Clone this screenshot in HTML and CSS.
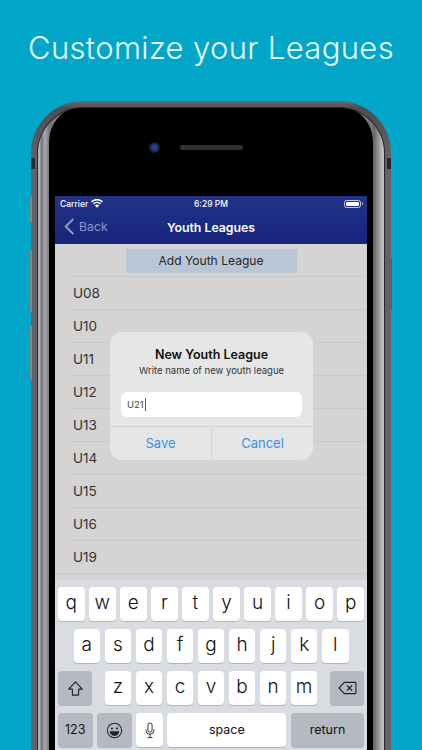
FILE: index.html
```html
<!DOCTYPE html>
<html lang="en">
<head>
<meta charset="utf-8">
<title>Customize your Leagues</title>
<link rel="stylesheet" href="styles.css">
</head>
<body>
<h1 class="headline">Customize your Leagues</h1>
<div class="phone">
  <span class="btn btn-mute"></span><span class="btn btn-up"></span><span class="btn btn-down"></span><span class="btn btn-power"></span>
  <span class="antenna antenna-l"></span><span class="antenna antenna-r"></span>
  <div class="band">
    <div class="bezel">
      <div class="sensors"><span class="camera"></span><span class="speaker"></span></div>
      <div class="screen">
        <header class="bar">
          <div class="status">
            <span class="carrier">Carrier
              <svg class="wifi" viewBox="0 0 14 10" width="12" height="9"><path d="M7 10 4.6 7.3a3.4 3.4 0 0 1 4.8 0zM3.5 6.2 2.2 4.8a6.8 6.8 0 0 1 9.6 0l-1.3 1.4a5 5 0 0 0-7 0zM1.2 3.8 0 2.5a10 10 0 0 1 14 0l-1.2 1.3a8.2 8.2 0 0 0-11.6 0z" fill="#fff"/></svg>
            </span>
            <span class="clock">6:29 PM</span>
            <span class="battery"><span class="battery-fill"></span></span>
          </div>
          <nav class="nav">
            <span class="back">
              <svg viewBox="0 0 11 18" width="11" height="17"><path d="M9.5 1 1.5 9l8 8" fill="none" stroke="#8d97c2" stroke-width="2.2"/></svg>
              Back
            </span>
            <span class="nav-title">Youth Leagues</span>
          </nav>
        </header>
        <main class="content">
          <div class="add-wrap"><span class="add">Add Youth League</span></div>
          <ul class="list">
            <li>U08</li><li>U10</li><li>U11</li><li>U12</li><li>U13</li><li>U14</li><li>U15</li><li>U16</li><li>U19</li>
          </ul>
          <div class="alert">
            <div class="alert-body">
              <div class="alert-title">New Youth League</div>
              <div class="alert-msg">Write name of new youth league</div>
              <div class="alert-input">U21<span class="caret"></span></div>
            </div>
            <div class="alert-actions"><span>Save</span><span>Cancel</span></div>
          </div>
        </main>
        <section class="kbd">
          <div class="kb-row">
            <span class="key">q</span><span class="key">w</span><span class="key">e</span><span class="key">r</span><span class="key">t</span><span class="key">y</span><span class="key">u</span><span class="key">i</span><span class="key">o</span><span class="key">p</span>
          </div>
          <div class="kb-row kb-row-2">
            <span class="key">a</span><span class="key">s</span><span class="key">d</span><span class="key">f</span><span class="key">g</span><span class="key">h</span><span class="key">j</span><span class="key">k</span><span class="key">l</span>
          </div>
          <div class="kb-row">
            <span class="key fn wide-shift"><svg viewBox="0 0 18 18" width="17" height="17"><path d="M9 2 1.8 9.6h3.9V16h6.6V9.6h3.9z" fill="none" stroke="#222" stroke-width="1.2" stroke-linejoin="round"/></svg></span>
            <span class="letters"><span class="key">z</span><span class="key">x</span><span class="key">c</span><span class="key">v</span><span class="key">b</span><span class="key">n</span><span class="key">m</span></span>
            <span class="key fn wide-shift"><svg viewBox="0 0 20 15" width="19" height="14"><path d="M6.5 1.5H18a1 1 0 0 1 1 1v10a1 1 0 0 1-1 1H6.500L1 7.500z" fill="none" stroke="#222" stroke-width="1.200" stroke-linejoin="round"/><path d="m9.500 4.800 5.400 5.400m0-5.400-5.400 5.400" stroke="#222" stroke-width="1.200"/></svg></span>
          </div>
          <div class="kb-row">
            <span class="key fn small-text k-123">123</span>
            <span class="key fn k-emoji"><svg viewBox="0 0 18 18" width="17" height="17"><circle cx="9" cy="9" r="7.600" fill="none" stroke="#222" stroke-width="1.100"/><circle cx="6.300" cy="6.800" r="1.100" fill="#222"/><circle cx="11.700" cy="6.800" r="1.100" fill="#222"/><path d="M4 9.800h10a5 5 0 0 1-10 0z" fill="#222"/></svg></span>
            <span class="key k-mic"><svg viewBox="0 0 12 20" width="10" height="17"><rect x="3.500" y="1" width="5" height="11" rx="2.500" fill="none" stroke="#222" stroke-width="1.100"/><path d="M1.200 8.500v1.300a4.800 4.800 0 0 0 9.600 0V8.500M6 14.600V18M3 18.500h6" fill="none" stroke="#222" stroke-width="1.100"/></svg></span>
            <span class="key small-text k-space">space</span>
            <span class="key fn small-text k-return">return</span>
          </div>
        </section>
      </div>
    </div>
  </div>
</div>
</body>
</html>
```
FILE: styles.css
```css
* { box-sizing: border-box; }
html, body { margin: 0; height: 750px; overflow: hidden; }
body { background: #01a6c9; font-family: Inter, "Liberation Sans", sans-serif; color: #2b2b2b; }

.headline {
  margin: 0;
  height: 101px;
  padding-top: 27px;
  text-align: center;
  font: 300 31px/42px Inter, "Liberation Sans", sans-serif;
  letter-spacing: .35px;
  color: #e8fbff;
  white-space: nowrap;
}

.phone {
  position: relative;
  width: 360px;
  height: 649px;
  margin-left: 31px;
  padding: 6px 6px 0;
  border-radius: 52px 52px 0 0;
  background: linear-gradient(180deg, #6a6b6e 0, #4d4e51 7px, #626366 60px);
}
.band {
  height: 100%;
  padding: 0 11px;
  border: 1px solid #242528;
  border-bottom: 0;
  border-radius: 46px 46px 0 0;
  background:
    linear-gradient(90deg, #b4b5b7 0 2px, #6f7073 3px, #a9aaad 7px, #77787b 11px) left top / 11px 100% no-repeat,
    linear-gradient(270deg, #bcbdbf 0 2px, #a2a3a5 4px, #5f6063 11px) right top / 11px 100% no-repeat,
    #77787b;
}
.bezel {
  position: relative;
  height: 100%;
  padding: 88px 6px 0;
  border-radius: 30px 30px 0 0 / 34px 34px 0 0;
  background: #000;
}
.sensors {
  position: absolute;
  top: 34px;
  left: 0;
  right: 0;
  display: flex;
  justify-content: center;
  align-items: center;
  gap: 20px;
  padding-right: 30px;
}
.camera { width: 11px; height: 11px; border-radius: 50%; background: radial-gradient(circle, #27458f 0 30%, #141a2a 60%, #23252a 100%); }
.speaker { width: 63px; height: 5px; border-radius: 3px; background: #333; }

.btn { position: absolute; width: 2px; border-radius: 1px; background: #85868a; }
.btn-mute { left: -1px; top: 95px; height: 27px; }
.btn-up { left: -1px; top: 149px; height: 62px; }
.btn-down { left: -1px; top: 224px; height: 55px; }
.btn-power { right: -1px; top: 157px; height: 52px; width: 3px; background: #5f6063; }
.antenna { position: absolute; top: 57px; width: 4px; height: 11px; background: #26272a; }
.antenna-l { left: 0; }
.antenna-r { right: 0; }

.screen {
  position: relative;
  width: 312px;
  height: 100%;
  display: flex;
  flex-direction: column;
  overflow: hidden;
}
.bar {
  height: 48px;
  flex: none;
  background: linear-gradient(180deg, #24338a 0, #16257b 100%);
  color: #fff;
}
.status {
  height: 15px;
  padding: 0 5px;
  display: grid;
  grid-template-columns: 1fr auto 1fr;
  align-items: center;
  font-size: 8.500px;
  font-weight: 500;
}
.carrier { display: flex; align-items: center; gap: 3px; }
.battery {
  position: relative;
  justify-self: end;
  margin-right: 1px;
  width: 17px;
  height: 8px;
  padding: 1px;
  border: 1px solid #c7cbe2;
  border-radius: 2.500px;
}
.battery::after {
  content: "";
  position: absolute;
  right: -3px;
  top: 1px;
  width: 1.500px;
  height: 3px;
  background: #c7cbe2;
  border-radius: 0 1px 1px 0;
}
.battery-fill { display: block; height: 100%; background: #fff; border-radius: 1px; }
.nav {
  position: relative;
  height: 33px;
  display: flex;
  justify-content: center;
  align-items: center;
}
.nav-title { font-size: 12.300px; font-weight: 600; }
.back {
  position: absolute;
  left: 9px;
  top: 7px;
  display: flex;
  align-items: center;
  gap: 4px;
  color: #8d97c2;
  font-size: 12.300px;
}

.content { position: relative; flex: 1; min-height: 0; background: #d4d4d4; }
.add-wrap { display: flex; justify-content: center; padding-top: 5px; }
.add { width: 171px; height: 24px; text-align: center; font-size: 12.100px; line-height: 24px; background: #b9c6d5; color: #262626; }
.list { list-style: none; margin: 3px 0 0; padding: 0 0 0 15px; border-bottom: 1px solid #c9c9c9; }
.list li {
  height: 33px;
  border-top: 1px solid #c9c9c9;
  padding-left: 3px;
  line-height: 32px;
  font-size: 13.500px;
  color: #333;
}

.alert {
  position: absolute;
  left: 55px;
  top: 88px;
  width: 203px;
  height: 128px;
  display: flex;
  flex-direction: column;
  background: #e6e6e6;
  border-radius: 12px;
}
.alert-body { flex: 1; padding: 16px 11px 0; text-align: center; }
.alert-title { font-size: 12.500px; font-weight: 600; line-height: 14px; color: #111; }
.alert-msg { margin-top: 3px; font-size: 9.500px; line-height: 12px; color: #333; }
.alert-input {
  display: flex;
  align-items: center;
  height: 25px;
  margin-top: 15px;
  padding-left: 6px;
  border-radius: 6px;
  background: #fff;
  font-size: 9.500px;
  color: #444;
}
.caret { width: 1.500px; height: 13px; background: #2563c4; margin-left: 1px; }
.alert-actions {
  height: 34px;
  display: grid;
  grid-template-columns: 101px 1fr;
  border-top: 1px solid #d3d3d3;
  color: #3a91e8;
  font-size: 13px;
  line-height: 33px;
  text-align: center;
}
.alert-actions span + span { border-left: 1px solid #d3d3d3; }

.kbd {
  flex: none;
  height: 170px;
  padding: 7px 3px 0;
  display: flex;
  flex-direction: column;
  gap: 8px;
  background: #d9dce1;
}
.kb-row { display: flex; justify-content: space-between; height: 34px; flex: none; }
.kb-row-2 { padding: 0 15.500px; }
.letters { display: flex; gap: 4.500px; }
.key {
  width: 26.500px;
  height: 34px;
  display: flex;
  justify-content: center;
  align-items: center;
  background: #fff;
  border-radius: 4px;
  box-shadow: 0 1px 0 #b2b5bb;
  font-size: 19px;
  font-weight: 300;
  color: #111;
  padding-bottom: 3px;
}
.fn { background: #b4b9c2; padding-bottom: 0; }
.wide-shift { width: 34px; }
.small-text { font-size: 12.500px; font-weight: 400; padding-bottom: 1px; }
.k-123, .k-emoji { width: 34.500px; }
.k-mic { padding-bottom: 0; }
.k-space { width: 119px; }
.k-return { width: 73px; }
```
